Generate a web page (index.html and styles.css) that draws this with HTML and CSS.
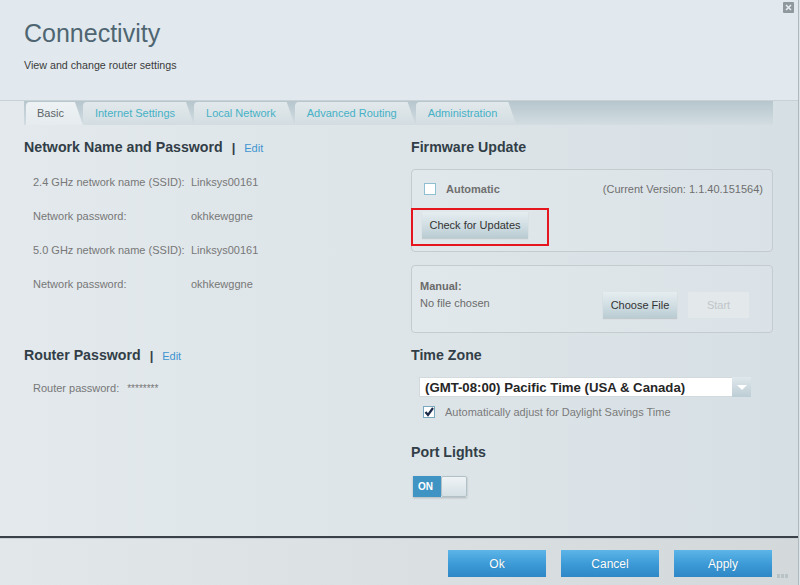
FILE: index.html
```html
<!DOCTYPE html>
<html lang="en">
<head>
    <meta charset="UTF-8">
    <title>Connectivity</title>
    <link rel="stylesheet" href="styles.css">
</head>
<body>
    <div class="dialog">
        <a class="close" href="#">
            <svg width="11" height="11" viewBox="0 0 11 11">
                <rect width="11" height="11" rx="1" fill="#8e989d"/>
                <path d="M3 3 L8 8 M8 3 L3 8" stroke="#e6ecef" stroke-width="1.6"/>
            </svg>
        </a>

        <div class="header">
            <h1>Connectivity</h1>
            <p>View and change router settings</p>
        </div>

        <div class="main">
            <div class="tabs">
                <div class="tab active">Basic</div>
                <div class="tab">Internet Settings</div>
                <div class="tab">Local Network</div>
                <div class="tab">Advanced Routing</div>
                <div class="tab">Administration</div>
            </div>

            <div class="content">
                <div class="col-left">
                    <h2>Network Name and Password <span class="sep">|</span> <a href="#">Edit</a></h2>
                    <div class="row"><span class="label">2.4 GHz network name (SSID):</span><span>Linksys00161</span></div>
                    <div class="row"><span class="label">Network password:</span><span>okhkewggne</span></div>
                    <div class="row"><span class="label">5.0 GHz network name (SSID):</span><span>Linksys00161</span></div>
                    <div class="row"><span class="label">Network password:</span><span>okhkewggne</span></div>

                    <h2 class="second">Router Password <span class="sep">|</span> <a href="#">Edit</a></h2>
                    <div class="row"><span>Router password:</span><span class="stars">********</span></div>
                </div>

                <div class="col-right">
                    <h2>Firmware Update</h2>
                    <div class="box auto">
                        <div class="auto-row">
                            <span class="check"></span>
                            <b>Automatic</b>
                            <span class="version">(Current Version: 1.1.40.151564)</span>
                        </div>
                        <button class="btn grey check-btn">Check for Updates</button>
                        <span class="mark"></span>
                    </div>

                    <div class="box manual">
                        <div class="manual-text">
                            <b>Manual:</b>
                            <span>No file chosen</span>
                        </div>
                        <div class="manual-btns">
                            <button class="btn grey choose">Choose File</button>
                            <button class="btn start" disabled>Start</button>
                        </div>
                    </div>

                    <h2 class="tz">Time Zone</h2>
                    <div class="select">
                        <span>(GMT-08:00) Pacific Time (USA &amp; Canada)</span>
                        <i class="arrow"></i>
                    </div>
                    <div class="dst">
                        <span class="check on">
                            <svg width="12" height="12" viewBox="0 0 12 12">
                                <path d="M2.5 6 L5 9 L10 2" fill="none" stroke="#1c2b4a" stroke-width="2.2"/>
                            </svg>
                        </span>
                        Automatically adjust for Daylight Savings Time
                    </div>

                    <h2 class="lights">Port Lights</h2>
                    <div class="toggle"><span class="on">ON</span><span class="knob"></span></div>
                </div>
            </div>
        </div>

        <div class="footer">
            <button class="btn blue">Ok</button>
            <button class="btn blue">Cancel</button>
            <button class="btn blue">Apply</button>
            <svg class="grip" width="14" height="6" viewBox="0 0 14 6">
                <rect x="0" y="1" width="3" height="4" fill="#b9c2c6"/>
                <rect x="4" y="1" width="3" height="4" fill="#b9c2c6"/>
                <rect x="8" y="1" width="3" height="4" fill="#b9c2c6"/>
            </svg>
        </div>
    </div>
</body>
</html>
```

FILE: styles.css
```css
* {
    margin: 0;
    padding: 0;
    box-sizing: border-box;
}

body {
    width: 800px;
    height: 585px;
    overflow: hidden;
    background: #dde5e9;
    font-family: "Liberation Sans", Arial, sans-serif;
    color: #333;
}

.dialog {
    position: relative;
    width: 799px;
    height: 585px;
    border-right: 1px solid #aeb9bf;
    display: flex;
    flex-direction: column;
}

.close {
    position: absolute;
    top: 2px;
    right: 4px;
    line-height: 0;
}

/* header */
.header {
    height: 101px;
    padding: 18px 24px 0;
    background: #e1e9ee;
    border-bottom: 1px solid #c7d1d6;
}

.header h1 {
    font-size: 25px;
    line-height: 30px;
    font-weight: normal;
    color: #4f6672;
}

.header p {
    margin-top: 10px;
    font-size: 10.7px;
    line-height: 14px;
    color: #3b3b3b;
}

/* main */
.main {
    flex: 1;
    background: linear-gradient(90deg, #e3e9ed 0%, #dce4e8 60%, #d6dfe4 100%);
    border-bottom: 2px solid #3a4148;
}

.tabs {
    margin: 0 25px 0 24px;
    height: 24px;
    padding-left: 2px;
    display: flex;
    align-items: flex-end;
    background: linear-gradient(180deg, #b7c6cd 0%, #c7d4da 60%, #d3dde2 100%);
}

.tab {
    height: 23px;
    line-height: 23px;
    padding: 0 19px 0 12px;
    font-size: 11px;
    color: #46b1c6;
    background: linear-gradient(180deg, #e2e9ec 0%, #d3dde1 100%);
    clip-path: polygon(0 0, calc(100% - 8px) 0, 100% 100%, 0 100%);
    border-top-left-radius: 4px;
}

.tab.active {
    color: #5b6468;
    background: linear-gradient(180deg, #eef2f4 0%, #e5ebee 100%);
    padding: 0 19px 0 11px;
}

.content {
    display: flex;
    padding: 14px 25px 0 24px;
}

.col-left {
    width: 387px;
}

.col-right {
    width: 362px;
}

h2 {
    font-size: 14.2px;
    line-height: 16px;
    color: #323e47;
}

h2 .sep {
    margin: 0 5px;
    font-size: 13px;
}

h2 a {
    font-size: 11px;
    font-weight: normal;
    color: #3e95cf;
    text-decoration: none;
}

.col-left h2 {
    margin-bottom: 9px;
}

h2.second {
    margin-top: 46px;
    margin-bottom: 7px;
}

.row {
    height: 34px;
    display: flex;
    align-items: center;
    padding-left: 9px;
    font-size: 11px;
    color: #777;
}

.row .label {
    width: 158px;
}

.row .stars {
    margin-left: 8px;
    font-size: 10px;
}

/* firmware */
.col-right h2:first-child + .box {
    margin-top: 14px;
}

.box {
    position: relative;
    border: 1px solid #c4ccd0;
    border-radius: 4px;
    background: rgba(255, 255, 255, 0.12);
}

.auto {
    padding: 11px 9px 13px 12px;
}

.auto-row {
    height: 16px;
    display: flex;
    align-items: center;
    font-size: 11px;
    color: #6f6f6f;
}

.auto-row b {
    margin-left: 10px;
}

.version {
    margin-left: auto;
}

.check {
    width: 12px;
    height: 12px;
    background: #fff;
    border: 1px solid #8fbfd0;
    display: inline-block;
    line-height: 0;
}

.check.on svg {
    margin: -1px 0 0 -1px;
}

.btn {
    font-family: "Liberation Sans", Arial, sans-serif;
    font-size: 11px;
    border: none;
    cursor: pointer;
}

.btn.grey {
    height: 26px;
    color: #333;
    background: linear-gradient(180deg, #e6edf0 0%, #cfdde2 55%, #b9ccd2 100%);
    box-shadow: 0 1px 1px rgba(0, 0, 0, 0.12);
}

.check-btn {
    display: block;
    width: 106px;
    margin: 15px 0 0 -2px;
}

.mark {
    position: absolute;
    left: -1px;
    top: 38px;
    width: 138px;
    height: 38px;
    border: 2px solid #e5161e;
}

.manual {
    margin-top: 13px;
    display: flex;
    padding: 13px 23px 14px 8px;
}

.manual-text {
    font-size: 11px;
    color: #6a6a6a;
    display: flex;
    flex-direction: column;
    line-height: 14px;
}

.manual-text span {
    margin-top: 3px;
}

.manual-btns {
    margin-left: auto;
    margin-top: 13px;
    display: flex;
    gap: 11px;
}

.choose {
    width: 74px;
}

.btn.start {
    width: 61px;
    height: 26px;
    color: #bfc6c9;
    background: #e3e8ea;
}

/* time zone */
h2.tz {
    margin-top: 14px;
}

.select {
    margin: 14px 0 0 8px;
    width: 332px;
    height: 20px;
    display: flex;
    align-items: center;
    background: #fff;
    border: 1px solid #d3dadd;
    font-size: 13.2px;
    font-weight: bold;
    color: #262626;
}

.select span {
    padding-left: 5px;
}

.arrow {
    margin-left: auto;
    width: 19px;
    height: 20px;
    margin-right: -1px;
    background: linear-gradient(180deg, #dfe8ec 0%, #bccdd4 100%);
    position: relative;
}

.arrow::after {
    content: "";
    position: absolute;
    left: 5px;
    top: 8px;
    border-left: 5px solid transparent;
    border-right: 5px solid transparent;
    border-top: 5px solid #fff;
}

.dst {
    margin: 7px 0 0 12px;
    height: 16px;
    display: flex;
    align-items: center;
    gap: 10px;
    font-size: 11px;
    color: #7a7a7a;
}

.check.on {
    border-color: #7aa7c0;
}

h2.lights {
    margin-top: 24px;
}

.toggle {
    margin: 16px 0 0 2px;
    width: 54px;
    height: 21px;
    display: flex;
    box-shadow: 0 1px 2px rgba(0, 0, 0, 0.2);
}

.toggle .on {
    width: 28px;
    background: #3f94c4;
    color: #fff;
    font-size: 10px;
    font-weight: bold;
    line-height: 21px;
    padding-left: 5px;
}

.toggle .knob {
    flex: 1;
    background: linear-gradient(180deg, #eef3f5 0%, #d5e0e5 100%);
    border: 1px solid #b2c1c8;
    border-radius: 2px;
}

/* footer */
.footer {
    position: relative;
    height: 47px;
    padding: 11px 26px 0 0;
    display: flex;
    justify-content: flex-end;
    gap: 15px;
    background: linear-gradient(90deg, #e2e7ea 0%, #d9dfe1 60%, #d3d9db 100%);
    border-top: 1px solid #c9d1d5;
}

.btn.blue {
    width: 98px;
    height: 27px;
    color: #fff;
    font-size: 12px;
    background: linear-gradient(180deg, #5db5e8 0%, #3d9bd7 50%, #2f87c6 100%);
    text-shadow: 0 0 1px rgba(0, 0, 0, 0.2);
}

.grip {
    position: absolute;
    right: 7px;
    bottom: 6px;
}
```
